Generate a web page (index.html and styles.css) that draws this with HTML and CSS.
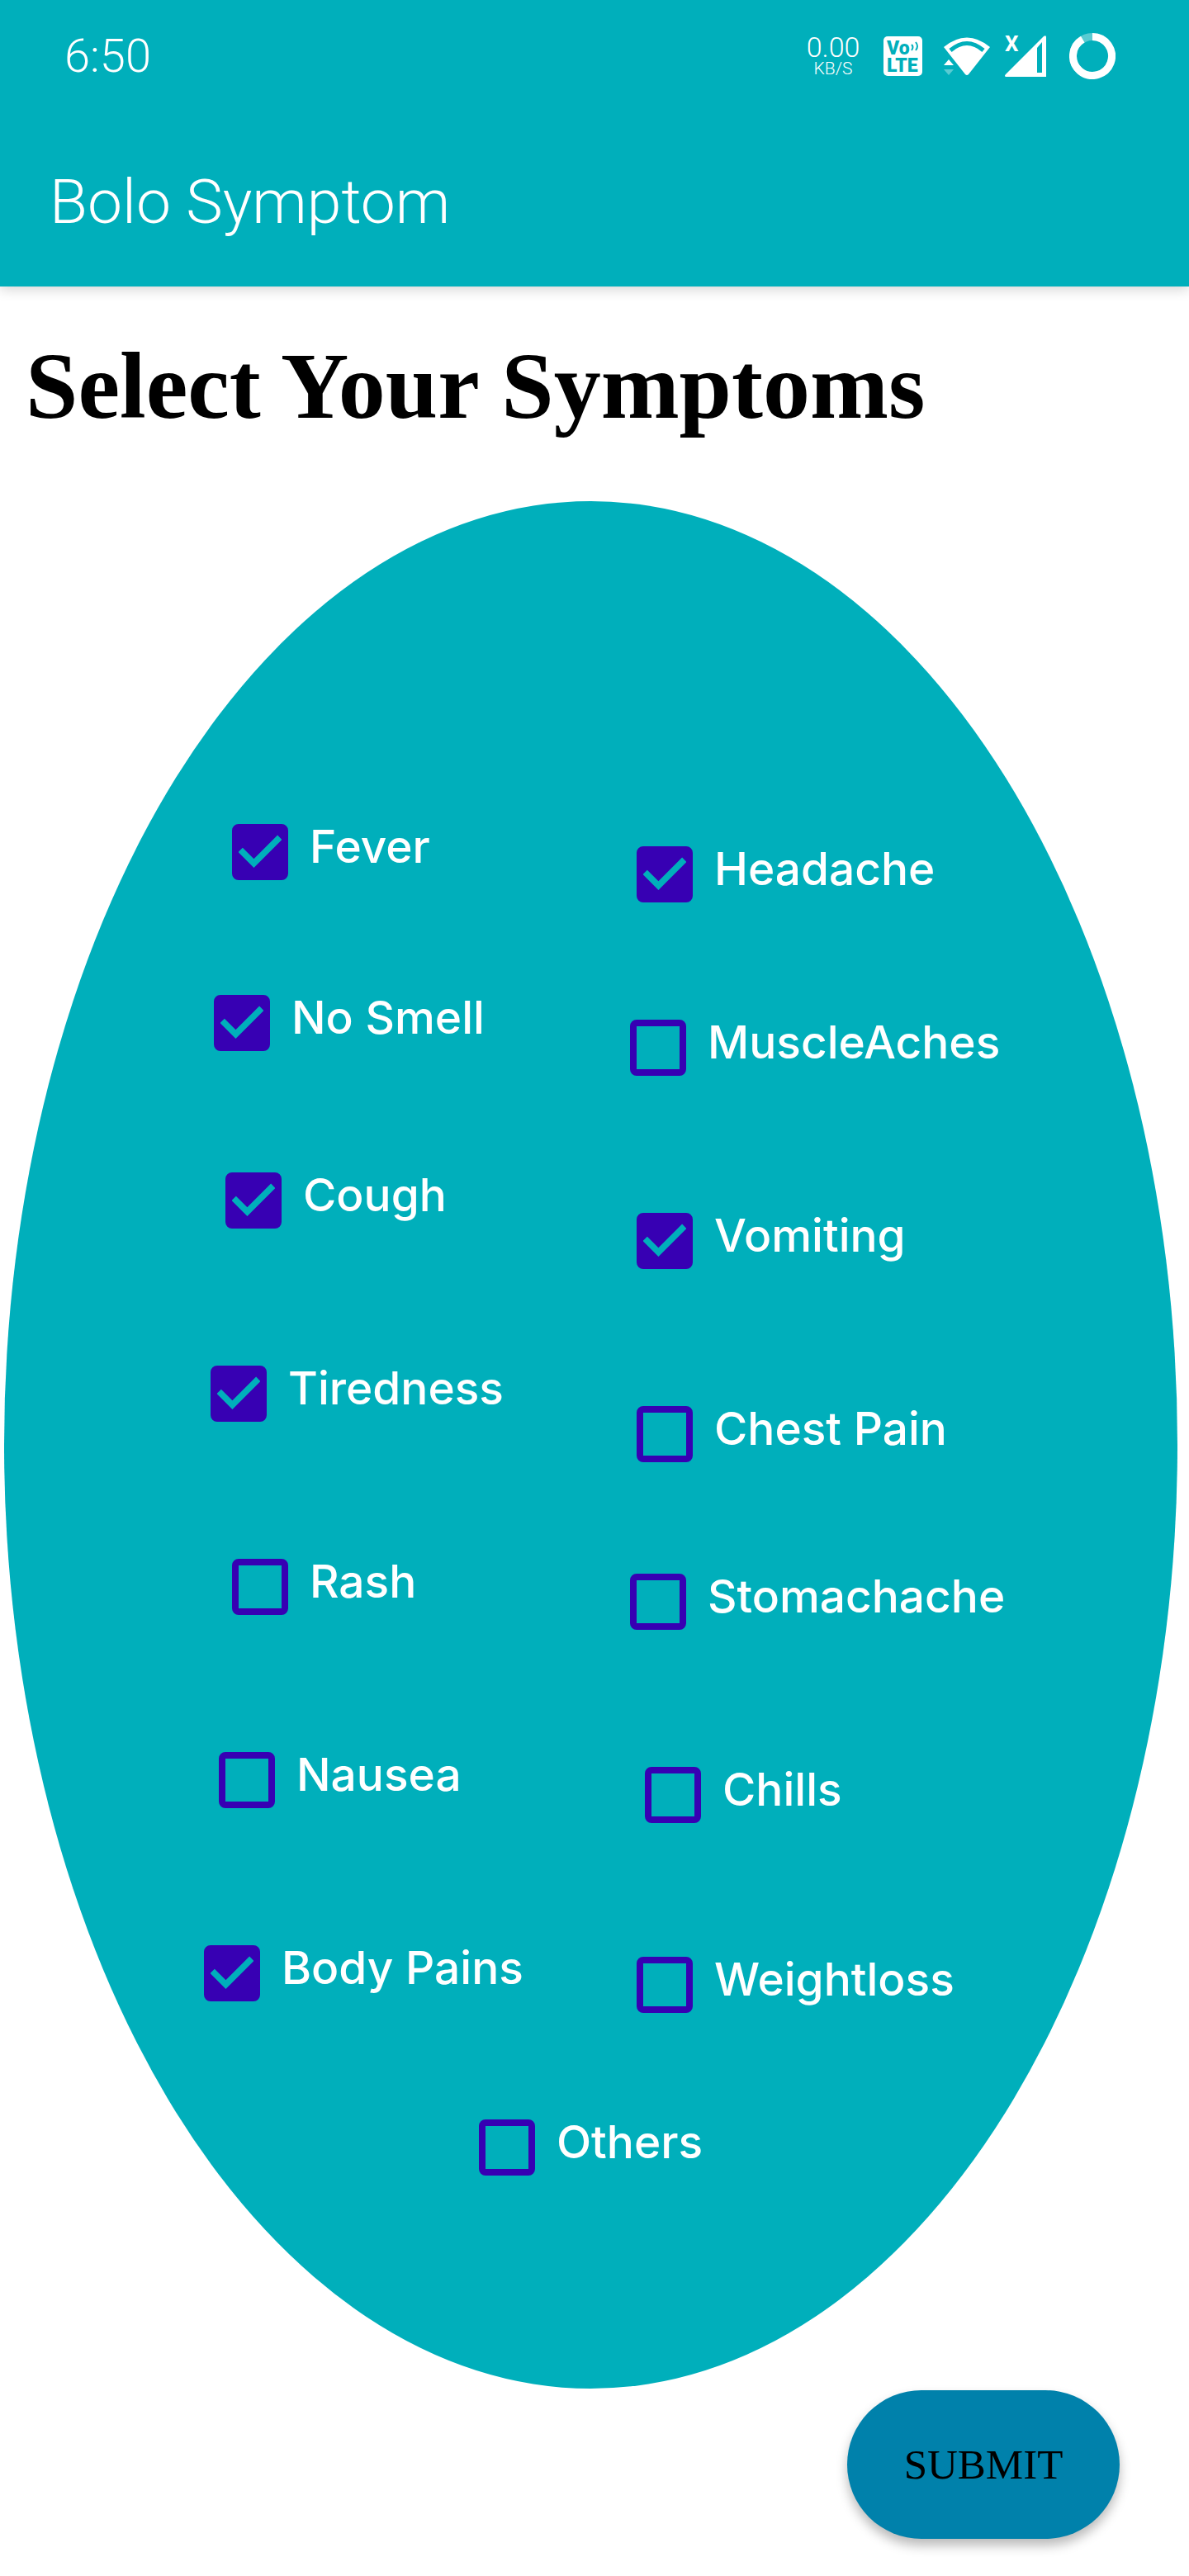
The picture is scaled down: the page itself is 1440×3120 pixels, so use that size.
FILE: index.html
```html
<!DOCTYPE html>
<html lang="en">
<head>
<meta charset="utf-8">
<meta name="viewport" content="width=device-width, initial-scale=1">
<title>Bolo Symptom</title>
<link rel="stylesheet" href="styles.css">
</head>
<body>
<header class="app-header">
  <div class="status-bar">
    <time class="clock">6:50</time>
    <div class="status-icons">
      <div class="net-speed"><span class="net-value">0.00</span><span class="net-unit">KB/S</span></div>
      <svg class="icon" width="55" height="48" viewBox="0 0 55 48" role="img" aria-label="VoLTE">
        <rect width="47" height="48" rx="5" fill="#fff"/>
        <text class="volte-text" x="4" y="22">Vo</text>
        <text class="volte-text" x="4" y="43">LTE</text>
        <path d="M34 10Q37 13 34 17M39 7Q43 12 39 17" fill="none" stroke="#00afbb" stroke-width="2"/>
      </svg>
      <svg class="icon" width="56" height="46" viewBox="0 0 56 46" role="img" aria-label="Wi-Fi">
        <path d="M0 12Q28 -11 56 12L30 45Q28 47 26 45Z" fill="#fff"/>
        <path d="M8 16Q28 -1 48 16" fill="none" stroke="#00afbb" stroke-width="5"/>
        <path d="M0 34L6 27L12 34Z" fill="#fff"/>
        <path d="M0 39H12L6 46Z" fill="#fff" opacity=".35"/>
      </svg>
      <svg class="icon" width="60" height="62" viewBox="0 -6 60 62" role="img" aria-label="Mobile signal">
        <path d="M1 50Q-1 49 1 47L47 1Q50 -1 50 2V50Z" fill="#fff"/>
        <path d="M39 45V15L45 8V45Z" fill="#00afbb"/>
        <text class="signal-mark" x="0" y="19">X</text>
      </svg>
      <svg class="icon" width="56" height="56" viewBox="0 0 56 56" role="img" aria-label="Battery">
        <circle cx="28" cy="28" r="23.5" fill="none" stroke="#fff" stroke-opacity=".35" stroke-width="9"/>
        <path d="M28 4.500A23.500 23.500 0 1 1 16.250 7.650" fill="none" stroke="#fff" stroke-width="9"/>
      </svg>
    </div>
  </div>
  <div class="title-bar">Bolo Symptom</div>
</header>
<main class="page">
  <h1 class="heading">Select Your Symptoms</h1>
  <form class="symptom-form">
    <div class="oval">
      <div class="column column-left">
        <label class="option indent-5"><input type="checkbox" checked><span>Fever</span></label>
        <label class="option indent-2"><input type="checkbox" checked><span>No Smell</span></label>
        <label class="option indent-4"><input type="checkbox" checked><span>Cough</span></label>
        <label class="option indent-1"><input type="checkbox" checked><span>Tiredness</span></label>
        <label class="option indent-5"><input type="checkbox"><span>Rash</span></label>
        <label class="option indent-3"><input type="checkbox"><span>Nausea</span></label>
        <label class="option"><input type="checkbox" checked><span>Body Pains</span></label>
      </div>
      <div class="column column-right">
        <label class="option indent-1"><input type="checkbox" checked><span>Headache</span></label>
        <label class="option"><input type="checkbox"><span>MuscleAches</span></label>
        <label class="option indent-1"><input type="checkbox" checked><span>Vomiting</span></label>
        <label class="option indent-1"><input type="checkbox"><span>Chest Pain</span></label>
        <label class="option"><input type="checkbox"><span>Stomachache</span></label>
        <label class="option indent-3"><input type="checkbox"><span>Chills</span></label>
        <label class="option indent-1"><input type="checkbox"><span>Weightloss</span></label>
      </div>
      <label class="option option-others"><input type="checkbox"><span>Others</span></label>
    </div>
    <button class="submit" type="submit">SUBMIT</button>
  </form>
</main>
</body>
</html>
```

FILE: styles.css
```css
:root {
  --teal: #00afbb;
  --purple: #3700b3;
}

* {
  box-sizing: border-box;
}

body {
  margin: 0;
  background: #fff;
  font-family: Inter, "Open Sans", sans-serif;
}

/* Header */
.app-header {
  background: var(--teal);
  color: #fff;
  font-family: Roboto, "Liberation Sans", sans-serif;
  font-weight: 300;
  box-shadow: 0 4px 14px rgba(0, 0, 0, 0.16);
}

.status-bar {
  display: flex;
  align-items: center;
  justify-content: space-between;
  height: 136px;
  padding: 0 89px 0 78px;
}

.clock {
  font-size: 56px;
}

.status-icons {
  display: flex;
  align-items: center;
  gap: 18px;
}

.icon {
  flex: none;
}

.net-speed {
  display: flex;
  flex-direction: column;
  align-items: center;
  width: 86px;
}

.net-value {
  font-size: 34px;
  line-height: 30px;
}

.net-unit {
  font-size: 21px;
  line-height: 22px;
}

.volte-text {
  font-size: 23px;
  font-weight: 900;
  fill: var(--teal);
}

.signal-mark {
  font-size: 26px;
  font-weight: 700;
  fill: #fff;
}

.title-bar {
  display: flex;
  align-items: center;
  height: 211px;
  padding: 4px 60px 0;
  font-size: 75px;
}

/* Symptom picker */
.page {
  padding: 57px 14px 45px 5px;
}

.heading {
  margin: 0 0 75px;
  padding-left: 26px;
  font-family: "Liberation Serif", serif;
  font-size: 114px;
  line-height: 128px;
  font-weight: 700;
  color: #000;
}

.symptom-form {
  display: flex;
  flex-direction: column;
  gap: 2px;
}

.oval {
  display: grid;
  grid-template-columns: 242fr 516fr 663fr;
  padding: 391px 0 258px;
  border-radius: 50%;
  background: var(--teal);
}

.column {
  display: flex;
  flex-direction: column;
  align-items: flex-start;
  gap: 166px;
}

.column-left {
  grid-column: 2;
}

.column-left .option:nth-child(1) {
  margin-bottom: -27px;
}

.column-left .option:nth-child(2) {
  margin-bottom: -19px;
}

.column-right {
  grid-column: 3;
  padding-top: 27px;
}

.column-right .option:nth-child(1) {
  margin-bottom: -24px;
}

.column-right .option:nth-child(4) {
  margin-bottom: -31px;
}

.column-right .option:nth-child(6) {
  margin-bottom: -4px;
}

.option {
  display: flex;
  align-items: flex-start;
  gap: 26px;
  height: 68px;
  color: #fff;
  font-size: 55px;
  line-height: 54px;
  font-weight: 500;
  white-space: nowrap;
}

.indent-1 { margin-left: 8px; }
.indent-2 { margin-left: 12px; }
.indent-3 { margin-left: 18px; }
.indent-4 { margin-left: 26px; }
.indent-5 { margin-left: 34px; }

.option input {
  appearance: none;
  flex: none;
  width: 68px;
  height: 68px;
  margin: 0;
  border: 8px solid var(--purple);
  border-radius: 8px;
}

.option input:checked {
  background: var(--purple) url("data:image/svg+xml,%3Csvg xmlns='http://www.w3.org/2000/svg' viewBox='3 3 18 18'%3E%3Cpath fill='%2300afbb' d='M10 17l-5-5 1.410-1.410L10 14.170l7.590-7.590L19 8z'/%3E%3C/svg%3E") center / 68px 68px no-repeat border-box;
}

.option-others {
  grid-column: 1 / -1;
  justify-self: center;
  margin-top: 129px;
}

.submit {
  align-self: flex-end;
  min-width: 330px;
  height: 180px;
  margin-right: 70px;
  border: 0;
  border-radius: 90px;
  background: #0081ab;
  color: #000;
  font-family: "Liberation Serif", serif;
  font-size: 51px;
  box-shadow: 0 8px 14px rgba(0, 0, 0, 0.28);
}
```
